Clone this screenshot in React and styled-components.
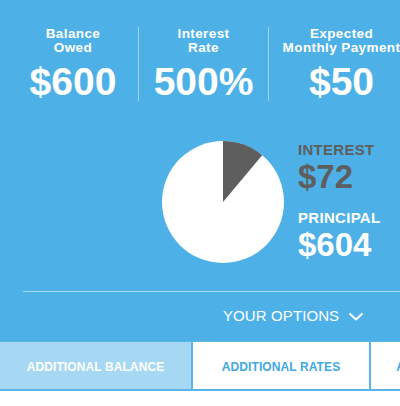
import React from 'react';
import styled, { createGlobalStyle } from 'styled-components';

const BLUE = '#4db1e7';
const DARK = '#5e5e5e';

const GlobalStyle = createGlobalStyle`
	html, body {
		margin: 0;
		padding: 0;
		overflow: hidden;
		background: #ffffff;
	}
	body {
		font-family: "Liberation Sans", Arial, sans-serif;
	}
`;

const stats = [
	{ label: ['Balance', 'Owed'], value: '$600' },
	{ label: ['Interest', 'Rate'], value: '500%' },
	{ label: ['Expected', 'Monthly Payment'], value: '$50' }
];

const tabs = [
	{ label: 'ADDITIONAL BALANCE', width: 193, active: true },
	{ label: 'ADDITIONAL RATES', width: 178 },
	{ label: 'ADDITIONAL PAYMENTS', width: 196 }
];

const Pie = ({ share }) => {
	// slice starts at 12 o'clock and runs clockwise
	const r = 61;
	const a = share * Math.PI * 2;
	const x = r * Math.sin(a);
	const y = -r * Math.cos(a);
	return (
		<svg width="122" height="122" viewBox="-61 -61 122 122">
			<circle cx="0" cy="0" r={r} fill="#ffffff" />
			<path d={`M0 0 L0 ${-r} A${r} ${r} 0 0 1 ${x} ${y} Z`} fill={DARK} />
		</svg>
	);
};

const App = () => (
	<Page>
		<GlobalStyle />
		<Hero>
			<StatsRow>
				{stats.map((s, i) => (
					<StatColumn key={s.value} first={i === 0}>
						<StatLabel>
							{s.label.map(line => <div key={line}>{line}</div>)}
						</StatLabel>
						<StatValue>{s.value}</StatValue>
					</StatColumn>
				))}
			</StatsRow>

			<Breakdown>
				<Pie share={0.111} />
				<Legend>
					<LegendLabel dark>INTEREST</LegendLabel>
					<LegendValue dark>$72</LegendValue>
					<LegendLabel spaced>PRINCIPAL</LegendLabel>
					<LegendValue>$604</LegendValue>
				</Legend>
			</Breakdown>

			<Options>
				<OptionsToggle>
					YOUR OPTIONS
					<svg width="16" height="9" viewBox="0 0 16 9">
						<path d="M1.5 1.5 L8 7.5 L14.5 1.5" fill="none" stroke="#fff" strokeWidth="2" />
					</svg>
				</OptionsToggle>
			</Options>
		</Hero>

		<TabBar>
			{tabs.map(t => (
				<Tab key={t.label} w={t.width} active={t.active}>{t.label}</Tab>
			))}
		</TabBar>
	</Page>
);

const Page = styled.div`
	width: 400px;
	height: 406px;
	overflow: hidden;
	background: #ffffff;
`;

const Hero = styled.div`
	background: ${BLUE};
	padding-top: 27px;
	color: #ffffff;
`;

const StatsRow = styled.div`
	display: grid;
	grid-template-columns: 138px 130px 146px;
	width: 414px;
`;

const StatColumn = styled.div`
	display: flex;
	flex-direction: column;
	align-items: center;
	padding-left: ${p => (p.first ? '8px' : '0')};
	border-left: ${p => (p.first ? 'none' : '1px solid rgba(255,255,255,0.45)')};
	white-space: nowrap;
`;

const StatLabel = styled.div`
	font-size: 13.5px;
	line-height: 14px;
	font-weight: bold;
	letter-spacing: 0.4px;
	text-align: center;
`;

const StatValue = styled.div`
	margin-top: 7px;
	font-size: 39px;
	line-height: 39px;
	font-weight: bold;
`;

const Breakdown = styled.div`
	display: flex;
	align-items: flex-start;
	gap: 14px;
	margin-top: 40px;
	padding-left: 162px;
`;

const Legend = styled.div`
	display: flex;
	flex-direction: column;
	margin-top: 1px;
`;

const LegendLabel = styled.div`
	margin-top: ${p => (p.spaced ? '17px' : '0')};
	font-size: 15px;
	line-height: 15px;
	font-weight: bold;
	color: ${p => (p.dark ? DARK : '#ffffff')};
	letter-spacing: 0.3px;
`;

const LegendValue = styled.div`
	margin-top: 3px;
	font-size: 33px;
	line-height: 33px;
	font-weight: bold;
	color: ${p => (p.dark ? DARK : '#ffffff')};
`;

const Options = styled.div`
	margin: 28px 0 0 23px;
	border-top: 1px solid rgba(255,255,255,0.5);
	padding: 16px 0 0 200px;
	height: 33px;
`;

const OptionsToggle = styled.div`
	display: flex;
	align-items: center;
	gap: 9px;
	font-size: 15px;
	line-height: 16px;
	white-space: nowrap;
	letter-spacing: 0.1px;
`;

const TabBar = styled.div`
	display: flex;
	border-top: 1px solid #58b6e9;
	border-bottom: 2px solid #58b6e9;
	background: #ffffff;
	width: 580px;
`;

const Tab = styled.div`
	flex: 0 0 ${p => p.w}px;
	height: 47px;
	display: flex;
	align-items: center;
	justify-content: center;
	border-right: 2px solid #58b6e9;
	background: ${p => (p.active ? '#a7d8f3' : '#ffffff')};
	color: ${p => (p.active ? '#ffffff' : '#3ea8e3')};
	font-size: 12px;
	font-weight: bold;
	letter-spacing: 0.1px;
	white-space: nowrap;
	padding-top: 3px;
	box-sizing: border-box;
`;

export default App;
